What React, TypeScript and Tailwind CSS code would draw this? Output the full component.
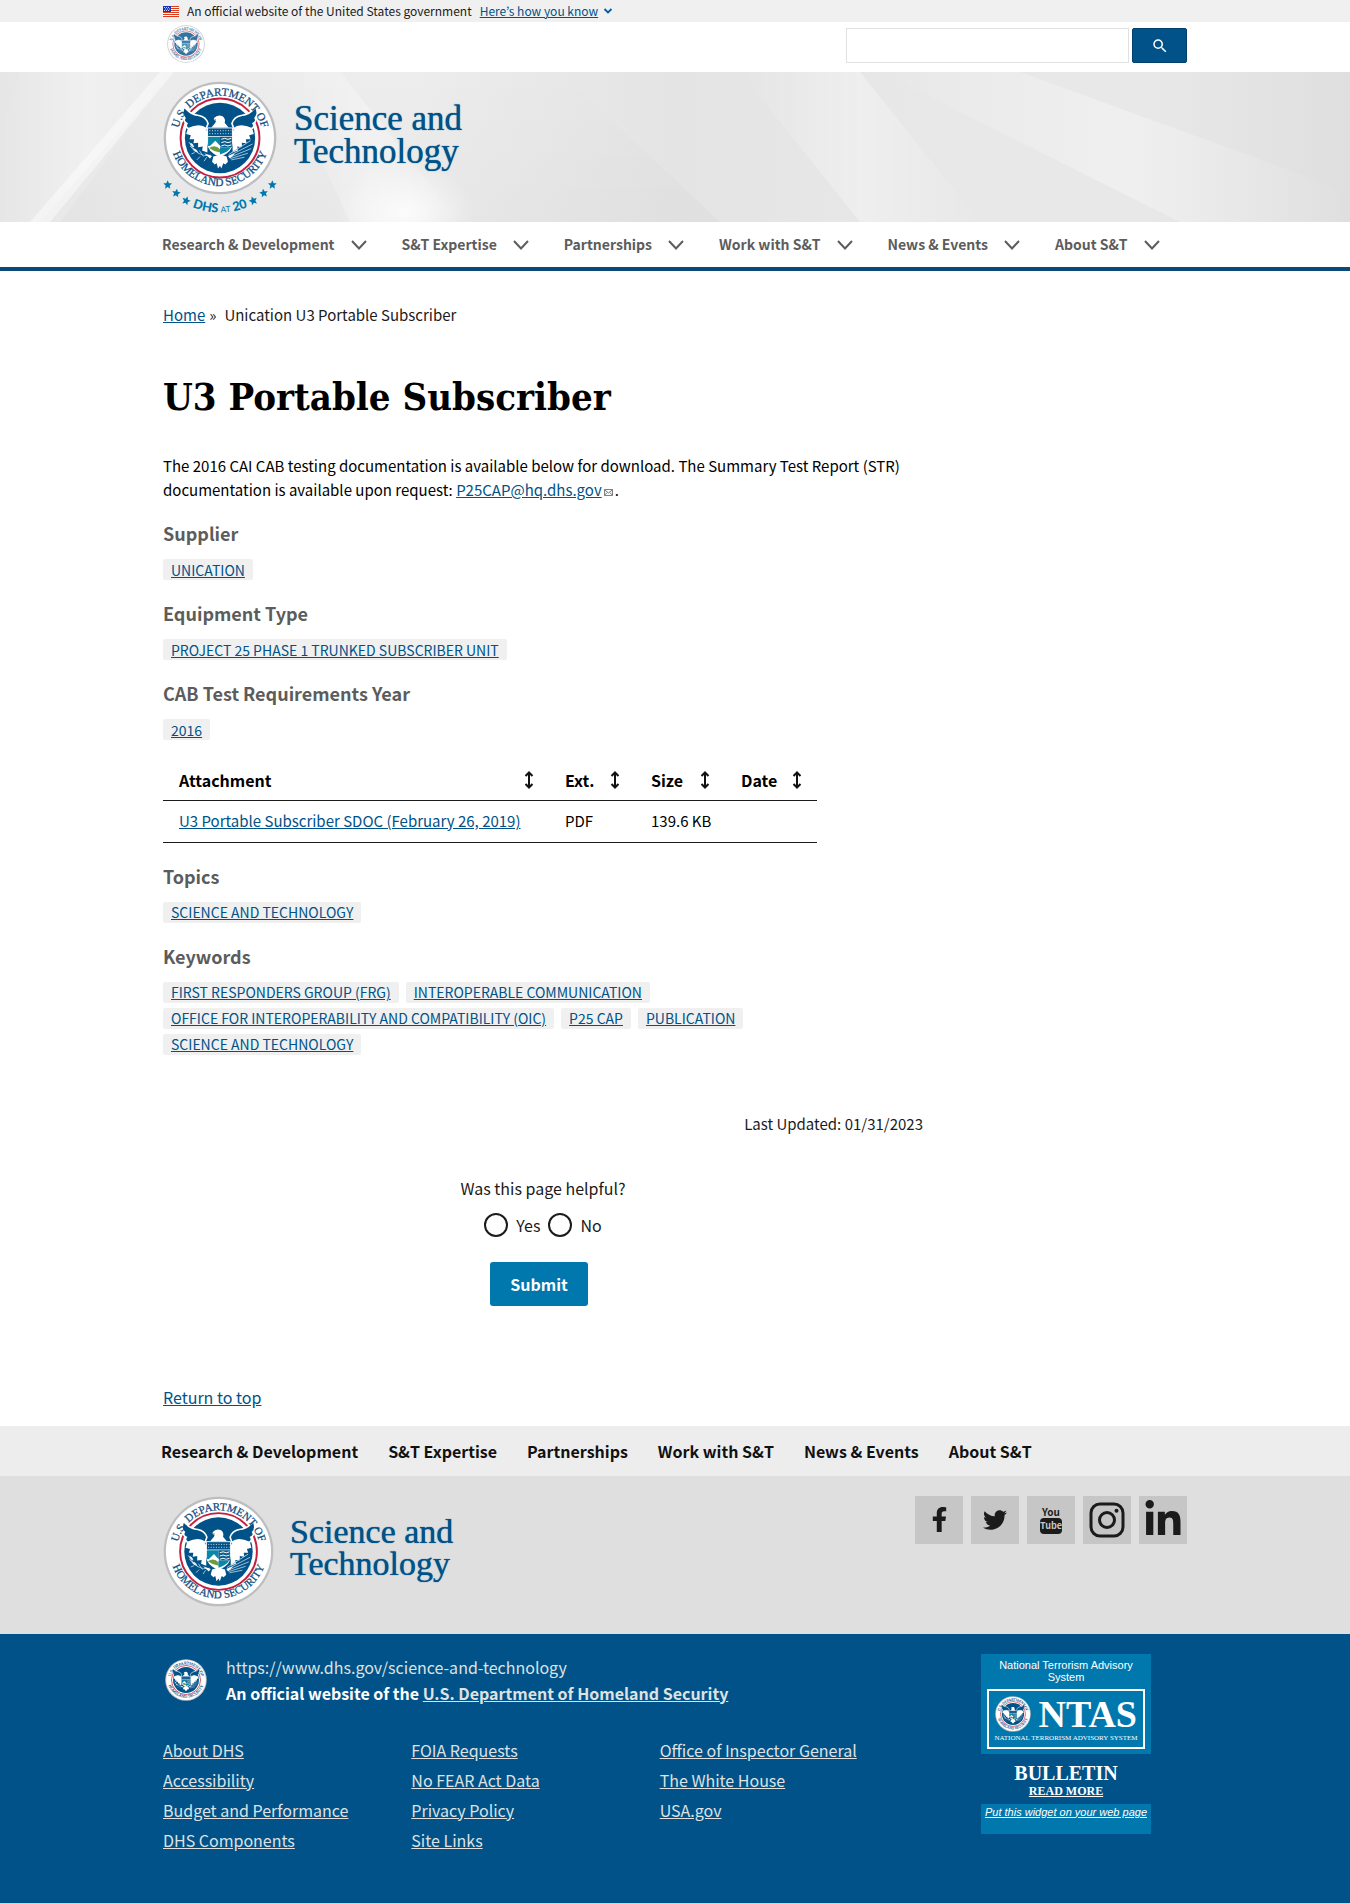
import type { ReactNode } from "react";
import { useId } from "react";
import { FaFacebookF, FaTwitter, FaLinkedinIn } from "react-icons/fa";
import { MdSearch } from "react-icons/md";

const star = "M0-13 4-4 13-4 6 3 8 12 0 7-8 12-6 3-13-4-4-4Z";

function Seal({ className }: { className: string }) {
  const id = useId();
  return (
    <svg viewBox="-172 -172 344 344" className={"shrink-0 " + className} role="img" aria-label="U.S. Department of Homeland Security seal">
      <defs>
        <path id={id + "t"} d="M-126 29A129 129 0 1 1 126 29" />
        <path id={id + "b"} d="M-151-6A151 151 0 1 0 151-6" />
      </defs>
      <circle r="170" fill="#bcbec2" />
      <circle r="163" fill="#fff" />
      <circle r="119" fill="none" stroke="#c41f3e" strokeWidth="6" />
      <circle r="106" fill="#005288" />
      {/* wings */}
      <path
        d="M-108-94Q-90-70-64-68Q-42-64-36-44L-42-28Q-60-44-96-28Q-106-36-100-44Q-112-50-106-60Q-118-72-108-94ZM108-94Q90-70 64-68Q42-64 36-44L42-28Q60-44 96-28Q106-36 100-44Q112-50 106-60Q118-72 108-94Z"
        fill="#005288" stroke="#fff" strokeWidth="5"
      />
      <path
        d="M-98-26Q-64-44-46-30L-38-20-38 44-54 38-52 26-66 28-66 14-80 16-78 4-92 4-88-8-102-12ZM98-26Q64-44 46-30L38-20 38 44 54 38 52 26 66 28 66 14 80 16 78 4 92 4 88-8 102-12Z"
        fill="#fff"
      />
      <g fill="#0f4c80" fontFamily="'Liberation Serif', serif" fontSize="34" textAnchor="middle" stroke="#0f4c80" strokeWidth=".8">
        <text><textPath href={"#" + id + "t"} startOffset="50%">U.S. DEPARTMENT OF</textPath></text>
        <text><textPath href={"#" + id + "b"} startOffset="50%">HOMELAND SECURITY</textPath></text>
      </g>
      {/* head */}
      <path d="M-26-32-14-46-12-52Q-20-54-18-60Q-8-72 8-66Q18-58 14-46L26-32Z" fill="#fff" />
      <path d="M-20-55-12-58-12-52Z" fill="#d9a441" />
      {/* olive branch and arrows */}
      <g stroke="#9fc3dd" strokeWidth="3" fill="none">
        <path d="M-28 52Q-66 62-94 12M-50 56-62 38M-64 48-78 32M-78 38-90 24M-40 58-48 70M-60 56-70 66M-76 44-86 48" />
        <path d="M26 50 92 8M28 54 98 18M30 58 94 32M32 62 84 46M34 66 74 58" />
      </g>
      <path d="M-90 14q10 2 12 14q-12-2-12-14M-82 32q12 0 16 12q-12 0-16-12" fill="#e6f0f7" />
      {/* shield */}
      <path d="M-39-32H39V14Q38 42 0 58Q-38 42-39 14Z" fill="#fff" />
      <path d="M-36-29H36V-6H-36Z" fill="#005288" />
      <path d="M-32-22H34M-32-13H34" stroke="#fff" strokeWidth="2.500" strokeDasharray="3 5" />
      <path d="M-36-4H0V22L-36 24Z" fill="#0a86a8" />
      <path d="M0-4H36V28H0Z" fill="#0d5d8c" />
      <path d="M4 4 14 1 24 4 34 1M4 14 14 11 24 14 34 11M4 24 14 21 24 24 34 21" stroke="#fff" strokeWidth="3" fill="none" />
      <path d="M-34 28-14 8 2 26V38L-30 32Z" fill="#fff" />
      <path d="M-33 30Q-14 18 0 34V44Q-20 40-33 30Z" fill="#6f9a3e" />
      <path d="M0 28H33Q26 42 0 50Z" fill="#0a86a8" />
      {/* tail */}
      <path d="M-20 56Q0 46 20 56L24 72 16 80 10 76 4 92 0 84-6 92-10 76-16 80-24 72Z" fill="#fff" />
      <path d="M-48 46-24 54-30 62ZM46 46 24 54 30 62Z" fill="#fff" />
    </svg>
  );
}

function Anniversary() {
  return (
    <svg viewBox="0 0 344 100" className="-mt-3 block w-[114px] overflow-visible" role="img" aria-label="DHS at 20">
      <defs>
        <path id="dhs20" d="M60 60Q172 118 284 60" />
      </defs>
      <g fill="#0078ae">
        <path d={star} transform="translate(14 5)" />
        <path d={star} transform="translate(40 30) rotate(10)" />
        <path d={star} transform="translate(70 53) rotate(20)" />
        <path d={star} transform="translate(330 5)" />
        <path d={star} transform="translate(304 30) rotate(-10)" />
        <path d={star} transform="translate(272 53) rotate(-20)" />
        <text fontFamily="Lato, sans-serif" fontWeight="900" fontSize="38" textAnchor="middle">
          <textPath href="#dhs20" startOffset="50%">DHS <tspan fontSize="25" fontWeight="400">AT</tspan> 20</textPath>
        </text>
      </g>
    </svg>
  );
}

function HeroBackdrop() {
  return (
    <svg className="absolute inset-0 h-full w-full" viewBox="0 0 1350 150" preserveAspectRatio="none" aria-hidden="true">
      <defs>
        <linearGradient id="base">
          <stop offset="0" stopColor="#e6e6e6" />
          <stop offset=".12" stopColor="#ececec" />
          <stop offset=".3" stopColor="#ededed" />
          <stop offset=".5" stopColor="#e4e4e4" />
          <stop offset=".7" stopColor="#e8e8e8" />
          <stop offset=".85" stopColor="#e8e8e8" />
          <stop offset="1" stopColor="#dfdfdf" />
        </linearGradient>
        <linearGradient id="ray">
          <stop offset="0" stopColor="#fff" stopOpacity="0" />
          <stop offset=".5" stopColor="#fff" stopOpacity=".32" />
          <stop offset="1" stopColor="#fff" stopOpacity="0" />
        </linearGradient>
        <linearGradient id="shade" x1="0" y1="0" x2="0" y2="1">
          <stop offset="0" stopColor="#000" stopOpacity="0" />
          <stop offset="1" stopColor="#000" stopOpacity=".02" />
        </linearGradient>
        <radialGradient id="glow">
          <stop offset="0" stopColor="#fff" stopOpacity=".8" />
          <stop offset="1" stopColor="#fff" stopOpacity="0" />
        </radialGradient>
      </defs>
      <path d="M0 0H1350V150H0Z" fill="url(#base)" />
      <path d="M172 0H560L720 150H60Z" fill="url(#shade)" />
      <path d="M20 0H172L40 150H0V60Z" fill="url(#ray)" />
      <path d="M160 0H174L50 150H30Z" fill="#fff" opacity=".45" />
      <path d="M280 0H340L460 150H350Z" fill="url(#ray)" />
      <ellipse cx="405" cy="140" rx="70" ry="50" fill="url(#glow)" />
      <path d="M740 0H860L980 150H860Z" fill="url(#ray)" />
      <path d="M880 0H1020L1350 120V150H1180Z" fill="url(#ray)" />
    </svg>
  );
}

function Wordmark({ className }: { className: string }) {
  return <div className={"font-['Liberation_Serif',serif] text-[#005288] [text-shadow:0_0_1px] " + className}>Science and<br />Technology</div>;
}

function Container({ className = "", children }: { className?: string; children: ReactNode }) {
  return <div className={"mx-auto max-w-[1024px] " + className}>{children}</div>;
}

const navItems = ["Research & Development", "S&T Expertise", "Partnerships", "Work with S&T", "News & Events", "About S&T"];

function Tag({ children }: { children: string }) {
  return (
    <li className="flex h-[21px] items-center rounded-xs bg-[#f0f0f0] px-2 text-[14px] leading-5">
      <a href="#" className="text-[#005288] underline">{children}</a>
    </li>
  );
}

function TagGroup({ title, tags }: { title: string; tags: string[] }) {
  return (
    <section>
      <h2 className="text-[18px] leading-6 font-bold text-[#5c5c5c]">{title}</h2>
      <ul className="mt-[14px] mb-[21px] flex max-w-[640px] flex-wrap gap-x-[7px] gap-y-[5px]">
        {tags.map((t) => <Tag key={t}>{t}</Tag>)}
      </ul>
    </section>
  );
}

function SortIcon() {
  return (
    <svg viewBox="0 0 10 18" className="h-[18px] w-[10px]" fill="none" stroke="#111" strokeWidth="2" aria-hidden="true">
      <path d="M5 2V16M1.500 5 5 1.500 8.500 5M1.500 13 5 16.500 8.500 13" />
    </svg>
  );
}

const columns = [
  { label: "Attachment", width: "w-[386px]" },
  { label: "Ext.", width: "w-[86px]" },
  { label: "Size", width: "w-[90px]" },
  { label: "Date", width: "w-[92px]" },
];

const footerLinks = [
  ["About DHS", "Accessibility", "Budget and Performance", "DHS Components"],
  ["FOIA Requests", "No FEAR Act Data", "Privacy Policy", "Site Links"],
  ["Office of Inspector General", "The White House", "USA.gov"],
];

function SocialLink({ label, children }: { label: string; children: ReactNode }) {
  return (
    <a href="#" aria-label={label} className="flex size-12 items-center justify-center bg-[#c6c6c6] text-[#1b1b1b]">{children}</a>
  );
}

export default function App() {
  return (
    <div className="min-h-screen bg-white font-['Noto_Sans_CJK_KR',sans-serif] text-[15px] text-[#1b1b1b]">
      <div className="bg-[#f0f0f0]">
        <Container className="flex h-[22px] items-center text-[12px] leading-4">
          <svg viewBox="0 0 16 11" className="mr-2 h-[11px] w-4" aria-hidden="true">
            <path d="M0 0H16V11H0Z" fill="#fff" />
            <path d="M0 .5H16M0 2.500H16M0 4.500H16M0 6.500H16M0 8.500H16M0 10.500H16" stroke="#db3e1f" />
            <path d="M0 0H8V6H0Z" fill="#1e33b1" />
            <path d="M1 1.500H7M2 3H7M1 4.500H7" stroke="#fff" strokeDasharray="1 1" strokeWidth=".8" />
          </svg>
          <p>An official website of the United States government</p>
          <button type="button" className="ml-2 flex items-center gap-[5px] text-[#005ea2]">
            <span className="text-[#005288] underline">Here’s how you know</span>
            <svg viewBox="0 0 10 6" className="h-[6px] w-[10px]" fill="none" stroke="currentColor" strokeWidth="1.800" aria-hidden="true">
              <path d="M1.500 1 5 4.500 8.500 1" />
            </svg>
          </button>
        </Container>
      </div>

      <header>
        <Container className="flex h-[50px] items-start justify-between">
          <a href="#" className="mt-[3px] ml-1"><Seal className="size-[38px] opacity-80" /></a>
          <form className="mt-[6px] flex gap-[3px]" onSubmit={(e) => e.preventDefault()}>
            <input type="search" aria-label="Search" className="h-[35px] w-[283px] border border-[#dfe1e5] bg-white px-2 outline-none" />
            <button type="submit" aria-label="Search" className="flex h-[35px] w-[55px] items-center justify-center rounded-[2px] border border-[#00406b] bg-[#005288] text-white">
              <MdSearch size={18} />
            </button>
          </form>
        </Container>

        <div className="relative">
          <HeroBackdrop />
          <Container className="relative flex h-[150px] items-start pt-[9px]">
            <a href="#" className="w-[114px]"><Seal className="block size-[114px]" /><Anniversary /></a>
            <Wordmark className="mt-[21px] ml-[17px] text-[35px] leading-[33px]" />
          </Container>
        </div>

        <nav aria-label="Primary" className="border-b-4 border-[#0b4a78]">
          <Container>
            <ul className="-ml-px flex h-[45px] items-center gap-[35px] text-[14px] font-bold text-[#5c5c5c]">
              {navItems.map((n) => (
                <li key={n}>
                  <button type="button" className="flex items-center gap-4 whitespace-nowrap">
                    {n}
                    <svg viewBox="0 0 16 10" className="h-[10px] w-4" fill="none" stroke="currentColor" strokeWidth="2" aria-hidden="true">
                      <path d="M1 1 8 8.500 15 1" />
                    </svg>
                  </button>
                </li>
              ))}
            </ul>
          </Container>
        </nav>
      </header>

      <main>
        <Container className="pt-8">
          <nav aria-label="Breadcrumb" className="flex h-6 items-center">
            <a href="#" className="text-[#005288] underline">Home</a>
            <span className="mr-2 ml-1">»</span>
            <span>Unication U3 Portable Subscriber</span>
          </nav>
          <div className="max-w-[760px] text-black">
            <h1 className="mt-11 font-['DejaVu_Serif_Condensed','DejaVu_Serif',serif] text-[38px] leading-[52px] font-bold">U3 Portable Subscriber</h1>
            <p className="mt-[31px] mb-[19px] leading-6">
              The 2016 CAI CAB testing documentation is available below for download. The Summary Test Report (STR) documentation is available upon request:{" "}
              <a href="#" className="text-[#005288] underline">P25CAP@hq.dhs.gov</a>
              <svg viewBox="0 0 10 8" className="mx-[2px] inline h-[7px] w-[9px] align-baseline" fill="none" stroke="#666" aria-hidden="true">
                <path d="M.5.5H9.500V7.500H.5ZM.5 1 5 4.500 9.500 1M.5 7 3.500 4M9.500 7 6.500 4" />
              </svg>
              .
            </p>
            <TagGroup title="Supplier" tags={["UNICATION"]} />
            <TagGroup title="Equipment Type" tags={["PROJECT 25 PHASE 1 TRUNKED SUBSCRIBER UNIT"]} />
            <TagGroup title="CAB Test Requirements Year" tags={["2016"]} />

            <table className="mb-[21px] border-collapse text-left leading-6">
              <thead>
                <tr className="h-[39px] border-b border-[#1b1b1b] text-[16px]">
                  {columns.map((c) => (
                    <th key={c.label} scope="col" className={c.width + " pr-[15px] pl-4"}>
                      <button type="button" className="flex w-full items-center justify-between font-bold">{c.label}<SortIcon /></button>
                    </th>
                  ))}
                </tr>
              </thead>
              <tbody>
                <tr className="h-[42px] border-b border-[#1b1b1b] whitespace-nowrap">
                  <td className="pl-4"><a href="#" className="text-[#005288] underline">U3 Portable Subscriber SDOC (February 26, 2019)</a></td>
                  <td className="pl-4">PDF</td>
                  <td className="pl-4">139.6 KB</td>
                  <td />
                </tr>
              </tbody>
            </table>

            <TagGroup title="Topics" tags={["SCIENCE AND TECHNOLOGY"]} />
            <TagGroup title="Keywords" tags={["FIRST RESPONDERS GROUP (FRG)", "INTEROPERABLE COMMUNICATION", "OFFICE FOR INTEROPERABILITY AND COMPATIBILITY (OIC)", "P25 CAP", "PUBLICATION", "SCIENCE AND TECHNOLOGY"]} />

            <p className="mt-[57px] text-right leading-6 text-[#1b1b1b]">Last Updated: 01/31/2023</p>

            <form className="mt-10 flex flex-col items-center text-[16px] leading-6 text-[#1b1b1b]" onSubmit={(e) => e.preventDefault()}>
              <fieldset>
                <legend className="text-center">Was this page helpful?</legend>
                <div className="mt-[13px] flex justify-center gap-2">
                  {["Yes", "No"].map((v) => (
                    <label key={v} className="flex items-center gap-2">
                      <input type="radio" name="helpful" className="size-6 appearance-none rounded-full border-2 border-[#1b1b1b] checked:bg-[#005ea2]" />
                      {v}
                    </label>
                  ))}
                </div>
              </fieldset>
              <button type="submit" className="mt-[25px] mr-2 h-11 rounded-[3px] bg-[#0078ae] px-5 font-bold text-white">Submit</button>
            </form>
          </div>
          <p className="mt-[79px] pb-[17px] text-[16px] leading-6"><a href="#" className="text-[#005288] underline">Return to top</a></p>
        </Container>
      </main>

      <footer className="text-[16px]">
        <nav aria-label="Footer" className="bg-[#ededed]">
          <Container>
            <ul className="-ml-[2px] flex h-[50px] items-center gap-[30px] font-bold text-[#111]">
              {navItems.map((n) => <li key={n}><a href="#" className="whitespace-nowrap">{n}</a></li>)}
            </ul>
          </Container>
        </nav>
        <div className="bg-[#dfdfdf]">
          <Container className="flex h-[158px] items-start justify-between pt-5">
            <a href="#" className="flex items-start">
              <Seal className="block size-[111px]" />
              <Wordmark className="mt-5 ml-4 text-[34px] leading-[32px]" />
            </a>
            <div className="flex gap-2">
              <SocialLink label="Facebook"><FaFacebookF size={25} /></SocialLink>
              <SocialLink label="Twitter"><FaTwitter size={24} /></SocialLink>
              <SocialLink label="YouTube">
                <svg viewBox="0 0 24 30" className="h-[30px] w-6" fontFamily="'Noto Sans CJK KR', sans-serif" fontWeight="700" textAnchor="middle" aria-hidden="true">
                  <rect x="1" y="13" width="22" height="16" rx="4" fill="#1b1b1b" />
                  <text x="12" y="11" fontSize="10" fill="#1b1b1b">You</text>
                  <text x="12" y="24" fontSize="9" fill="#c6c6c6">Tube</text>
                </svg>
              </SocialLink>
              <SocialLink label="Instagram">
                <svg viewBox="0 0 36 36" className="size-9" fill="none" stroke="currentColor" strokeWidth="3" aria-hidden="true">
                  <rect x="2" y="2" width="32" height="32" rx="9" />
                  <circle cx="18" cy="18" r="7.500" />
                  <circle cx="27.500" cy="8.800" r="2" fill="currentColor" stroke="none" />
                </svg>
              </SocialLink>
              <SocialLink label="LinkedIn"><FaLinkedinIn size={40} /></SocialLink>
            </div>
          </Container>
        </div>
        <div className="bg-[#005288] text-[#dfe1e2]">
          <Container className="flex min-h-[269px] justify-between pt-5">
            <div className="flex-1">
              <div className="flex leading-[26px]">
                <Seal className="mt-[5px] ml-[2px] size-[42px]" />
                <div className="ml-[19px]">
                  <p>https://www.dhs.gov/science-and-technology</p>
                  <p className="font-bold text-white">An official website of the <a href="#" className="text-[#dfe1e2] underline">U.S. Department of Homeland Security</a></p>
                </div>
              </div>
              <div className="mt-[29px] grid max-w-[745px] grid-cols-3">
                {footerLinks.map((col) => (
                  <ul key={col[0]} className="leading-[30px]">
                    {col.map((l) => <li key={l}><a href="#" className="underline">{l}</a></li>)}
                  </ul>
                ))}
              </div>
            </div>
            <aside className="mr-9 w-[170px] font-['Liberation_Sans',sans-serif] text-[11px] leading-3 text-white">
              <div className="h-[100px] bg-[#0078ae] px-[6px] pt-[5px] text-center">
                <p className="px-2">National Terrorism Advisory System</p>
                <a href="#" className="mt-[6px] block h-[60px] border-2 border-white px-1 pt-[5px] font-['Liberation_Serif',serif]">
                  <span className="flex items-center justify-between px-[2px]">
                    <Seal className="size-[36px]" />
                    <span className="text-[38px] leading-[36px] font-bold">NTAS</span>
                  </span>
                  <span className="flex justify-center text-[7px] leading-3 whitespace-nowrap">NATIONAL TERRORISM ADVISORY SYSTEM</span>
                </a>
              </div>
              <div className="h-[50px] pt-[9px] text-center font-['Liberation_Serif',serif] font-bold">
                <p className="text-[20px] leading-5">BULLETIN</p>
                <a href="#" className="block text-[12px] leading-4 underline">READ MORE</a>
              </div>
              <div className="h-[30px] bg-[#0078ae] pt-[2px] text-center whitespace-nowrap italic">
                <a href="#" className="underline">Put this widget on your web page</a>
              </div>
            </aside>
          </Container>
        </div>
      </footer>
    </div>
  );
}
